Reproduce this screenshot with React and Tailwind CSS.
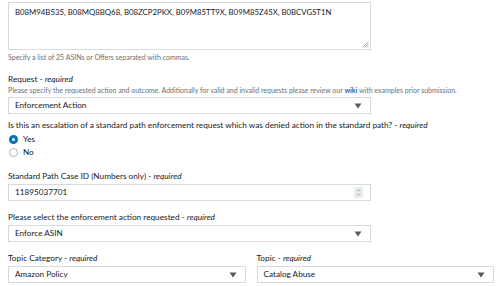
import React from 'react';

const Caret = () => (
  <svg width="8" height="6" viewBox="0 0 8 6" className="shrink-0">
    <path d="M0.5 0.5h7L4 5.5z" fill="#545b64" />
  </svg>
);

const Label = ({ children, className = '' }) => (
  <div className={`text-[8.25px] leading-[12px] text-[#16191f] ${className}`}>
    {children} - <span className="italic">required</span>
  </div>
);

const SelectBox = ({ value, className = '' }) => (
  <div
    className={`flex items-center justify-between h-[17px] border border-[#d5dbdb] bg-white pl-[6px] pr-[8px] text-[8.2px] text-[#16191f] ${className}`}
  >
    <span>{value}</span>
    <Caret />
  </div>
);

const Radio = ({ checked, label }) => (
  <div className="flex items-center h-[13px] pl-[1px] gap-[5px] text-[8.2px] text-[#16191f]">
    {checked ? (
      <span className="w-[9px] h-[9px] rounded-full bg-[#0073bb] flex items-center justify-center">
        <span className="w-[3px] h-[3px] rounded-full bg-white" />
      </span>
    ) : (
      <span className="w-[9px] h-[9px] rounded-full border border-[#aab7b8] bg-white" />
    )}
    <span>{label}</span>
  </div>
);

export default function App() {
  return (
    <div
      className="w-[500px] h-[286px] bg-white overflow-hidden px-[8px] pt-[2px]"
      style={{ fontFamily: 'Lato, "Open Sans", sans-serif' }}
    >
      {/* lista de ASINs */}
      <div className="relative w-[363px] h-[48px] border border-[#d5dbdb] bg-white pl-[6px] pt-[4px] text-[7.8px] text-[#16191f]">
        B08M94B535, B08MQ8BQ68, B08ZCP2PKX, B09M85TT9X, B09M85Z45X, B0BCVGST1N
        <svg width="7" height="7" viewBox="0 0 7 7" className="absolute right-[1px] bottom-[1px]">
          <path d="M6.5 0.5L0.5 6.5M6.5 2.5L2.5 6.5M6.5 4.5L4.5 6.5" stroke="#8d969e" strokeWidth="0.7" />
        </svg>
      </div>
      <div className="mt-[2px] text-[7px] leading-[10px] text-[#687078]">
        Specify a list of 25 ASINs or Offers separated with commas.
      </div>

      {/* tipo de solicitud */}
      <Label className="mt-[11px]">Request</Label>
      <div className="text-[7px] leading-[10px] text-[#687078]">
        Please specify the requested action and outcome. Additionally for valid and invalid requests please review our{' '}
        <span className="font-bold text-[#0073bb]">wiki</span> with examples prior submission.
      </div>
      <SelectBox value="Enforcement Action" className="mt-[2px] w-[363px]" />

      <Label className="mt-[5px]">
        Is this an escalation of a standard path enforcement request which was denied action in the standard path?
      </Label>
      <div className="mt-[2px] flex flex-col">
        <Radio checked label="Yes" />
        <Radio label="No" />
      </div>

      <Label className="mt-[11px]">Standard Path Case ID (Numbers only)</Label>
      <div className="mt-[2px] w-[363px] h-[17px] flex items-center justify-between border border-[#d5dbdb] bg-white pl-[6px] pr-[7px] text-[8.2px] text-[#16191f]">
        <span>11895037701</span>
        <span className="w-[9px] h-[11px] bg-[#eaeded] flex items-center justify-center">
          <svg width="5" height="9" viewBox="0 0 5 9">
            <path d="M1 3.5L2.5 1.5L4 3.5M1 5.5L2.5 7.5L4 5.5" stroke="#8d969e" strokeWidth="0.7" fill="none" />
          </svg>
        </span>
      </div>

      <Label className="mt-[10px]">Please select the enforcement action requested</Label>
      <SelectBox value="Enforce ASIN" className="mt-[2px] w-[363px]" />

      <div className="mt-[10px] flex gap-[11px] w-[486px]">
        <div className="flex-1">
          <Label>Topic Category</Label>
          <SelectBox value="Amazon Policy" className="mt-[2px]" />
        </div>
        <div className="flex-1">
          <Label>Topic</Label>
          <SelectBox value="Catalog Abuse" className="mt-[2px]" />
        </div>
      </div>
    </div>
  );
}
